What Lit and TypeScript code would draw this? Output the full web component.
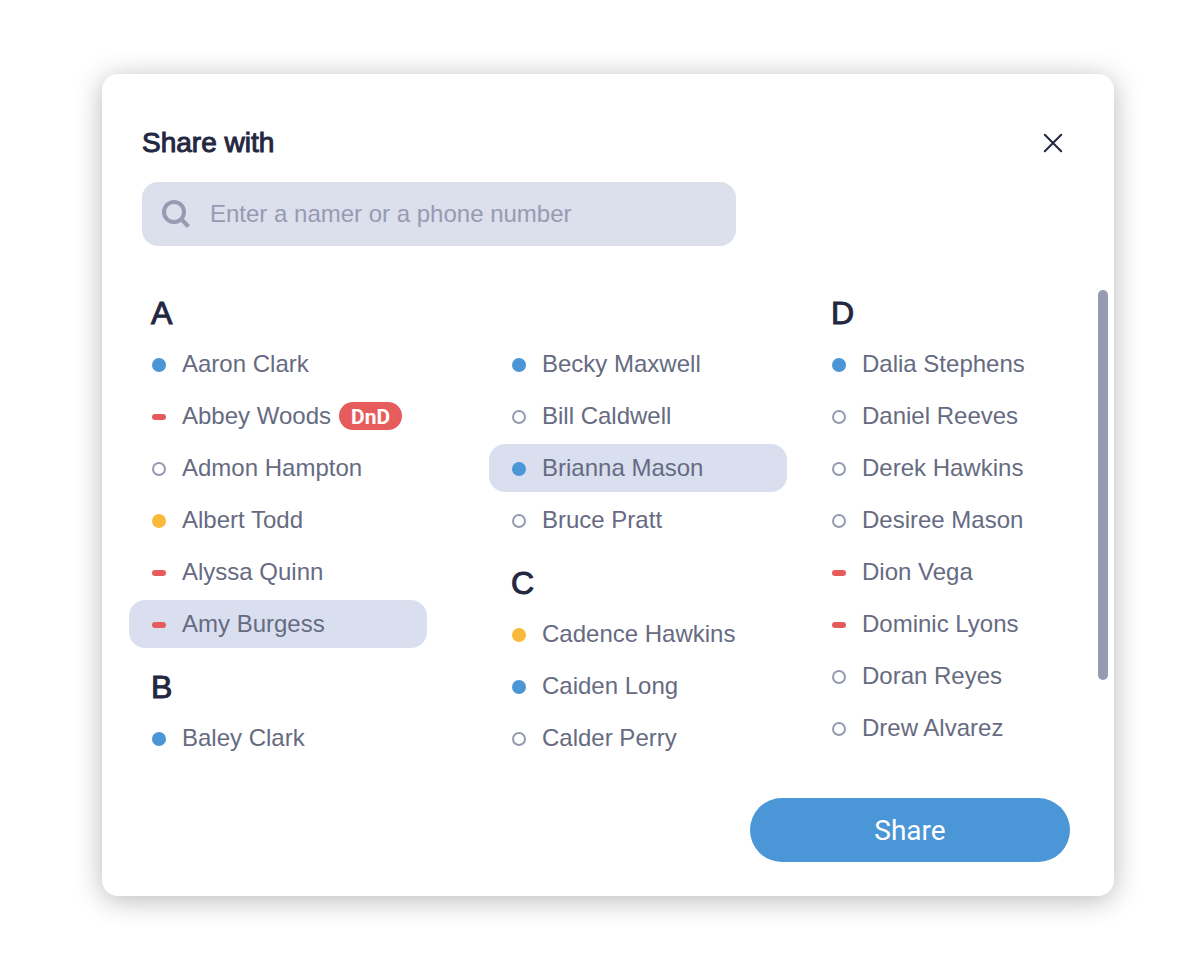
import { LitElement, html, css, nothing } from "lit";
import { customElement, property, state } from "lit/decorators.js";
import { classMap } from "lit/directives/class-map.js";

type Status = "online" | "busy" | "away" | "offline";

interface Contact {
  name: string;
  status: Status;
  badge?: string;
}

interface Group {
  letter?: string;
  contacts: Contact[];
}

const person = (name: string, status: Status, badge?: string): Contact => ({ name, status, badge });

const COLUMNS: Group[][] = [
  [
    {
      letter: "A",
      contacts: [
        person("Aaron Clark", "online"),
        person("Abbey Woods", "busy", "DnD"),
        person("Admon Hampton", "offline"),
        person("Albert Todd", "away"),
        person("Alyssa Quinn", "busy"),
        person("Amy Burgess", "busy"),
      ],
    },
    { letter: "B", contacts: [person("Baley Clark", "online")] },
  ],
  [
    {
      contacts: [
        person("Becky Maxwell", "online"),
        person("Bill Caldwell", "offline"),
        person("Brianna Mason", "online"),
        person("Bruce Pratt", "offline"),
      ],
    },
    {
      letter: "C",
      contacts: [
        person("Cadence Hawkins", "away"),
        person("Caiden Long", "online"),
        person("Calder Perry", "offline"),
      ],
    },
  ],
  [
    {
      letter: "D",
      contacts: [
        person("Dalia Stephens", "online"),
        person("Daniel Reeves", "offline"),
        person("Derek Hawkins", "offline"),
        person("Desiree Mason", "offline"),
        person("Dion Vega", "busy"),
        person("Dominic Lyons", "busy"),
        person("Doran Reyes", "offline"),
        person("Drew Alvarez", "offline"),
      ],
    },
  ],
];

@customElement("contact-row")
export class ContactRow extends LitElement {
  @property({ attribute: false }) contact!: Contact;
  @property({ type: Boolean }) selected = false;

  static styles = css`
    :host {
      display: block;
    }
    .row {
      box-sizing: border-box;
      display: flex;
      align-items: center;
      width: 100%;
      max-width: 298px;
      height: 48px;
      margin: 0;
      padding: 0 0 0 23px;
      border: 0;
      border-radius: 16px;
      background: transparent;
      color: #666b82;
      font: 24px/48px "Liberation Sans", Arial, sans-serif;
      text-align: left;
      white-space: nowrap;
      cursor: pointer;
    }
    .selected {
      background: #d9dfef;
    }
    .status {
      box-sizing: border-box;
      flex: none;
      width: 14px;
      height: 14px;
      margin: 2px 16px 0 0;
      border-radius: 7px;
    }
    .online {
      background: #4a96d6;
    }
    .away {
      background: #fbb93c;
    }
    .offline {
      border: 2px solid #969bb2;
      background: #fff;
    }
    .busy {
      height: 6px;
      border-radius: 3px;
      background: #e65c5c;
    }
    .badge {
      margin-left: 8px;
      padding: 2px 12px 0;
      border-radius: 14px;
      background: #e65c5c;
      color: #fff;
      font: bold 21px/26px Roboto, sans-serif;
    }
  `;

  render() {
    const { name, status, badge } = this.contact;
    return html`
      <button
        type="button"
        class=${classMap({ row: true, selected: this.selected })}
        aria-pressed=${this.selected ? "true" : "false"}
      >
        <span class=${classMap({ status: true, [status]: true })}></span>
        <span>${name}</span>
        ${badge ? html`<span class="badge">${badge}</span>` : nothing}
      </button>
    `;
  }
}

@customElement("app-root")
export class AppRoot extends LitElement {
  @state() private chosen = new Set(["Amy Burgess", "Brianna Mason"]);

  static styles = css`
    :host {
      display: block;
      box-sizing: border-box;
      min-height: 100vh;
      padding: 74px 82px 72px 102px;
      background: #fff;
      color: #23273f;
      font-family: "Liberation Sans", Arial, sans-serif;
    }
    .dialog {
      padding: 52px 0 34px;
      border-radius: 16px;
      background: #fff;
      box-shadow: 0 4px 28px rgba(0, 0, 0, 0.28);
    }
    .header {
      display: flex;
      align-items: center;
      justify-content: space-between;
      padding: 0 44px 0 40px;
    }
    .title {
      margin: 0;
      font-size: 28px;
      line-height: 34px;
      font-weight: 400;
      -webkit-text-stroke: 1px currentColor;
    }
    .close {
      display: grid;
      place-items: center;
      width: 34px;
      height: 34px;
      padding: 0;
      border: 0;
      background: none;
      color: inherit;
      cursor: pointer;
    }
    .search {
      display: flex;
      align-items: center;
      gap: 20px;
      box-sizing: border-box;
      width: calc(100% - 80px);
      max-width: 594px;
      height: 64px;
      margin: 22px 40px 44px;
      padding: 0 20px;
      border-radius: 16px;
      background: #dcdfec;
      color: #969bb2;
    }
    .search-icon {
      flex: none;
    }
    .field {
      flex: 1;
      min-width: 0;
      height: 32px;
      padding: 0;
      border: 0;
      outline: 0;
      background: none;
      color: #23273f;
      font: 24px/32px "Liberation Sans", Arial, sans-serif;
    }
    .field::placeholder {
      color: #969bb2;
      opacity: 1;
    }
    .body {
      display: flex;
      align-items: flex-start;
      padding: 0 6px 0 27px;
    }
    .columns {
      flex: 1;
      display: grid;
      grid-template-columns: 360fr 320fr 289fr;
    }
    .column {
      display: flex;
      flex-direction: column;
      gap: 16px;
      min-width: 0;
    }
    .group {
      display: flex;
      flex-direction: column;
      gap: 4px;
    }
    .letter {
      height: 46px;
      margin: 0;
      padding-left: 22px;
      font-size: 32px;
      line-height: 46px;
      font-weight: 400;
      -webkit-text-stroke: 1px currentColor;
    }
    .list {
      display: flex;
      flex-direction: column;
      gap: 4px;
      margin: 0;
      padding: 0;
      list-style: none;
    }
    .scrollbar {
      flex: none;
      width: 10px;
      height: 390px;
      border-radius: 5px;
      background: #969bb2;
    }
    .footer {
      display: flex;
      justify-content: flex-end;
      padding: 36px 44px 0;
    }
    .share {
      width: 320px;
      height: 64px;
      padding: 2px 0 0;
      border: 0;
      border-radius: 32px;
      background: #4a96d6;
      color: #fff;
      font: 28px/62px Roboto, sans-serif;
      cursor: pointer;
    }
  `;

  private toggle(name: string) {
    const next = new Set(this.chosen);
    if (!next.delete(name)) next.add(name);
    this.chosen = next;
  }

  private renderGroup(group: Group) {
    return html`
      <section class="group">
        ${group.letter
          ? html`<h2 class="letter">${group.letter}</h2>`
          : html`<div class="letter"></div>`}
        <ul class="list">
          ${group.contacts.map(
            (contact) => html`
              <li>
                <contact-row
                  .contact=${contact}
                  .selected=${this.chosen.has(contact.name)}
                  @click=${() => this.toggle(contact.name)}
                ></contact-row>
              </li>
            `
          )}
        </ul>
      </section>
    `;
  }

  render() {
    return html`
      <main class="dialog" role="dialog" aria-labelledby="title">
        <header class="header">
          <h1 class="title" id="title">Share with</h1>
          <button class="close" type="button" aria-label="Close">
            <svg width="20" height="20" viewBox="0 0 20 20" fill="none" stroke="currentColor" stroke-width="2" stroke-linecap="round">
              <path d="M1.800 1.800 18.200 18.200M18.200 1.800 1.800 18.200" />
            </svg>
          </button>
        </header>
        <label class="search">
          <svg class="search-icon" width="28" height="28" viewBox="0 0 28 28" fill="none" stroke="currentColor" stroke-width="4" aria-hidden="true">
            <circle cx="12" cy="12" r="10" />
            <path d="M20 20 26.500 26.500" />
          </svg>
          <input class="field" type="text" aria-label="Search contacts" placeholder="Enter a namer or a phone number" />
        </label>
        <div class="body">
          <div class="columns">
            ${COLUMNS.map(
              (groups) => html`<div class="column">${groups.map((g) => this.renderGroup(g))}</div>`
            )}
          </div>
          <div class="scrollbar"></div>
        </div>
        <footer class="footer">
          <button class="share" type="button">Share</button>
        </footer>
      </main>
    `;
  }
}
